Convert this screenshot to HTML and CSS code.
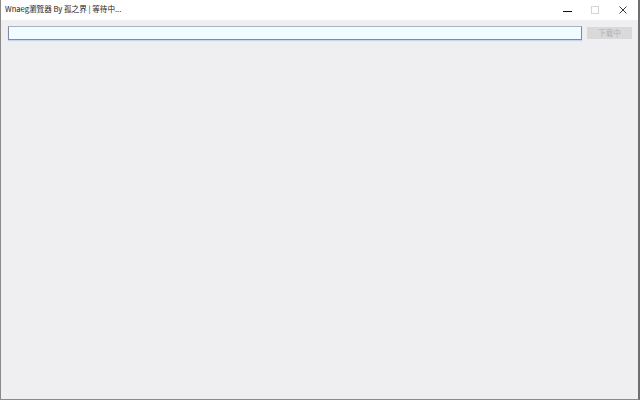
FILE: index.html
```html
<!DOCTYPE html>
<html>
<head>
<meta charset="utf-8">
<link rel="stylesheet" href="styles.css">
</head>
<body>
<div class="window">
  <div class="titlebar">
    <div class="title">Wnaeg瀏覽器 By 孤之界 | 等待中...</div>
    <div class="controls">
      <div class="ctl"><svg width="9" height="9" viewBox="0 0 9 9"><path d="M0 5.5H9" stroke="#111" stroke-width="1"/></svg></div>
      <div class="ctl"><svg width="8" height="8" viewBox="0 0 8 8"><rect x="0.5" y="0.5" width="7" height="7" fill="none" stroke="#d4d4d4" stroke-width="1"/></svg></div>
      <div class="ctl"><svg width="8" height="8" viewBox="0 0 8 8"><path d="M0.5 0.5L7.5 7.5M7.5 0.5L0.5 7.5" stroke="#222" stroke-width="0.9"/></svg></div>
    </div>
  </div>
  <div class="content">
    <div class="toolbar">
      <div class="urlbox"></div>
      <div class="btn">下载中</div>
    </div>
  </div>
</div>
</body>
</html>
```
FILE: styles.css
```css
html, body { margin: 0; padding: 0; }
body {
  width: 640px; height: 400px; overflow: hidden;
  font-family: "Noto Sans CJK TC", "Liberation Sans", sans-serif;
  background: #efeef0;
}
.window {
  box-sizing: border-box;
  width: 640px; height: 400px;
  border-left: 1px solid #8a8a8a;
  border-right: 2px solid #6f6f6f;
  border-bottom: 1px solid #8a8a8a;
  display: flex; flex-direction: column;
}
.titlebar {
  height: 20px; background: #fff;
  display: flex; align-items: center; justify-content: space-between;
}
.title {
  font-family: "Noto Sans CJK TC", "Noto Sans", sans-serif;
  font-size: 7.6px; color: #222; padding-left: 4px; line-height: 20px;
  margin-top: -2px;
}
.controls { display: flex; height: 20px; }
.ctl { width: 27px; height: 20px; display: flex; align-items: center; justify-content: center; }
.ctl:last-child { width: 30px; }
.content { flex: 1; background: #efeef0; }
.toolbar {
  display: flex; align-items: flex-start; gap: 5px;
  padding: 6px 6px 0 7px;
}
.urlbox {
  flex: 1; height: 12px;
  background: #f0fcff;
  border: 1px solid #7d8ca5;
  border-top-color: #a9b2c4;
  box-shadow: 0 1px 1px #c9d6ee;
}
.btn {
  width: 45px; height: 12px; margin-top: 1px;
  background: #d9d9d9; color: #b0b0b0;
  font-size: 7.5px; line-height: 12px; text-align: center;
}
```
